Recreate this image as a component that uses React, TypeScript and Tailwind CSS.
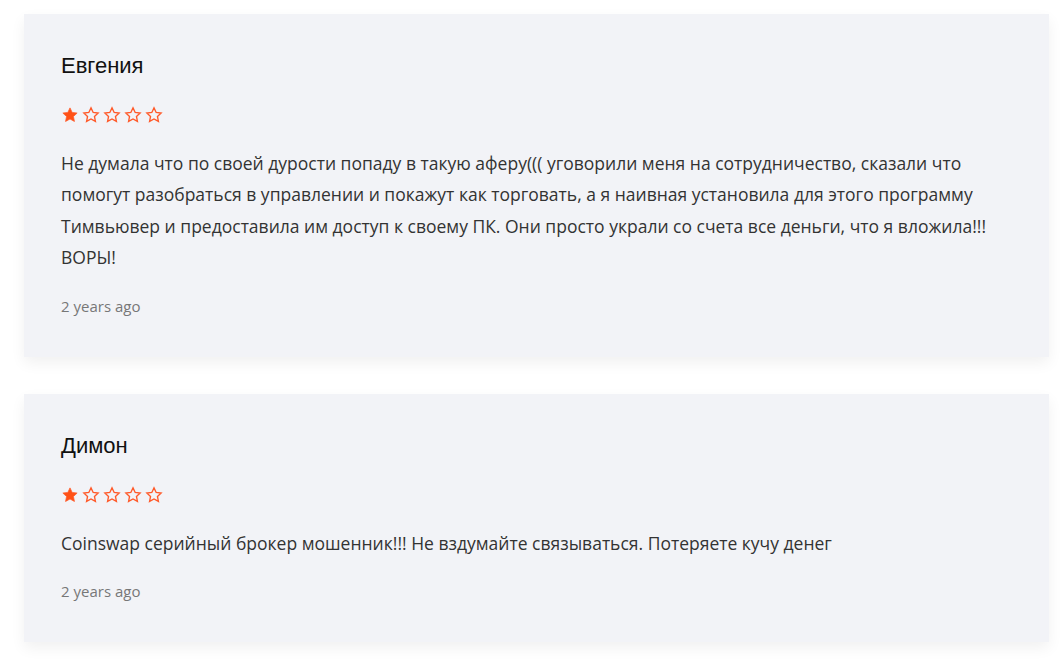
import React from "react";

const reviews = [
  {
    id: 1,
    name: "Евгения",
    rating: 1,
    text: "Не думала что по своей дурости попаду в такую аферу((( уговорили меня на сотрудничество, сказали что помогут разобраться в управлении и покажут как торговать, а я наивная установила для этого программу Тимвьювер и предоставила им доступ к своему ПК. Они просто украли со счета все деньги, что я вложила!!! ВОРЫ!",
    time: "2 years ago",
  },
  {
    id: 2,
    name: "Димон",
    rating: 1,
    text: "Coinswap серийный брокер мошенник!!! Не вздумайте связываться. Потеряете кучу денег",
    time: "2 years ago",
  },
];

const STAR =
  "M12 2.5l2.9 6.1 6.6.8-4.9 4.6 1.3 6.6L12 17.3l-5.9 3.3 1.3-6.6-4.9-4.6 6.6-.8z";

function Stars({ rating }: { rating: number }) {
  return (
    <div className="flex gap-[3px]">
      {[1, 2, 3, 4, 5].map((i) => (
        <svg key={i} viewBox="0 0 24 24" className="w-[18px] h-[18px]">
          <path
            d={STAR}
            fill={i <= rating ? "#ff5116" : "none"}
            stroke="#ff5a2a"
            strokeWidth={i <= rating ? 1 : 1.8}
            strokeLinejoin="miter"
          />
        </svg>
      ))}
    </div>
  );
}

export default function App() {
  return (
    <div className="min-h-screen bg-white pl-[24px] pr-[12px] pt-[14px] pb-6 flex flex-col gap-[37px]">
      {reviews.map((r) => (
        <div
          key={r.id}
          className="bg-[#f2f3f7] shadow-[0_6px_14px_rgba(0,0,0,0.06)] pl-[37px] pr-[37px] pt-[39px] pb-[39px]"
        >
          <h3 className="text-[22px] leading-[26px] text-[#111] font-['Liberation_Sans',Arial,sans-serif]">
            {r.name}
          </h3>
          <div className="mt-[27px]">
            <Stars rating={r.rating} />
          </div>
          <p className="mt-[24px] text-[17.5px] leading-[31.4px] text-[#333] font-['Open_Sans',sans-serif]">
            {r.text}
          </p>
          <div className="mt-[20px] text-[15px] leading-[24px] text-[#777] font-['Open_Sans',sans-serif]">
            {r.time}
          </div>
        </div>
      ))}
    </div>
  );
}
